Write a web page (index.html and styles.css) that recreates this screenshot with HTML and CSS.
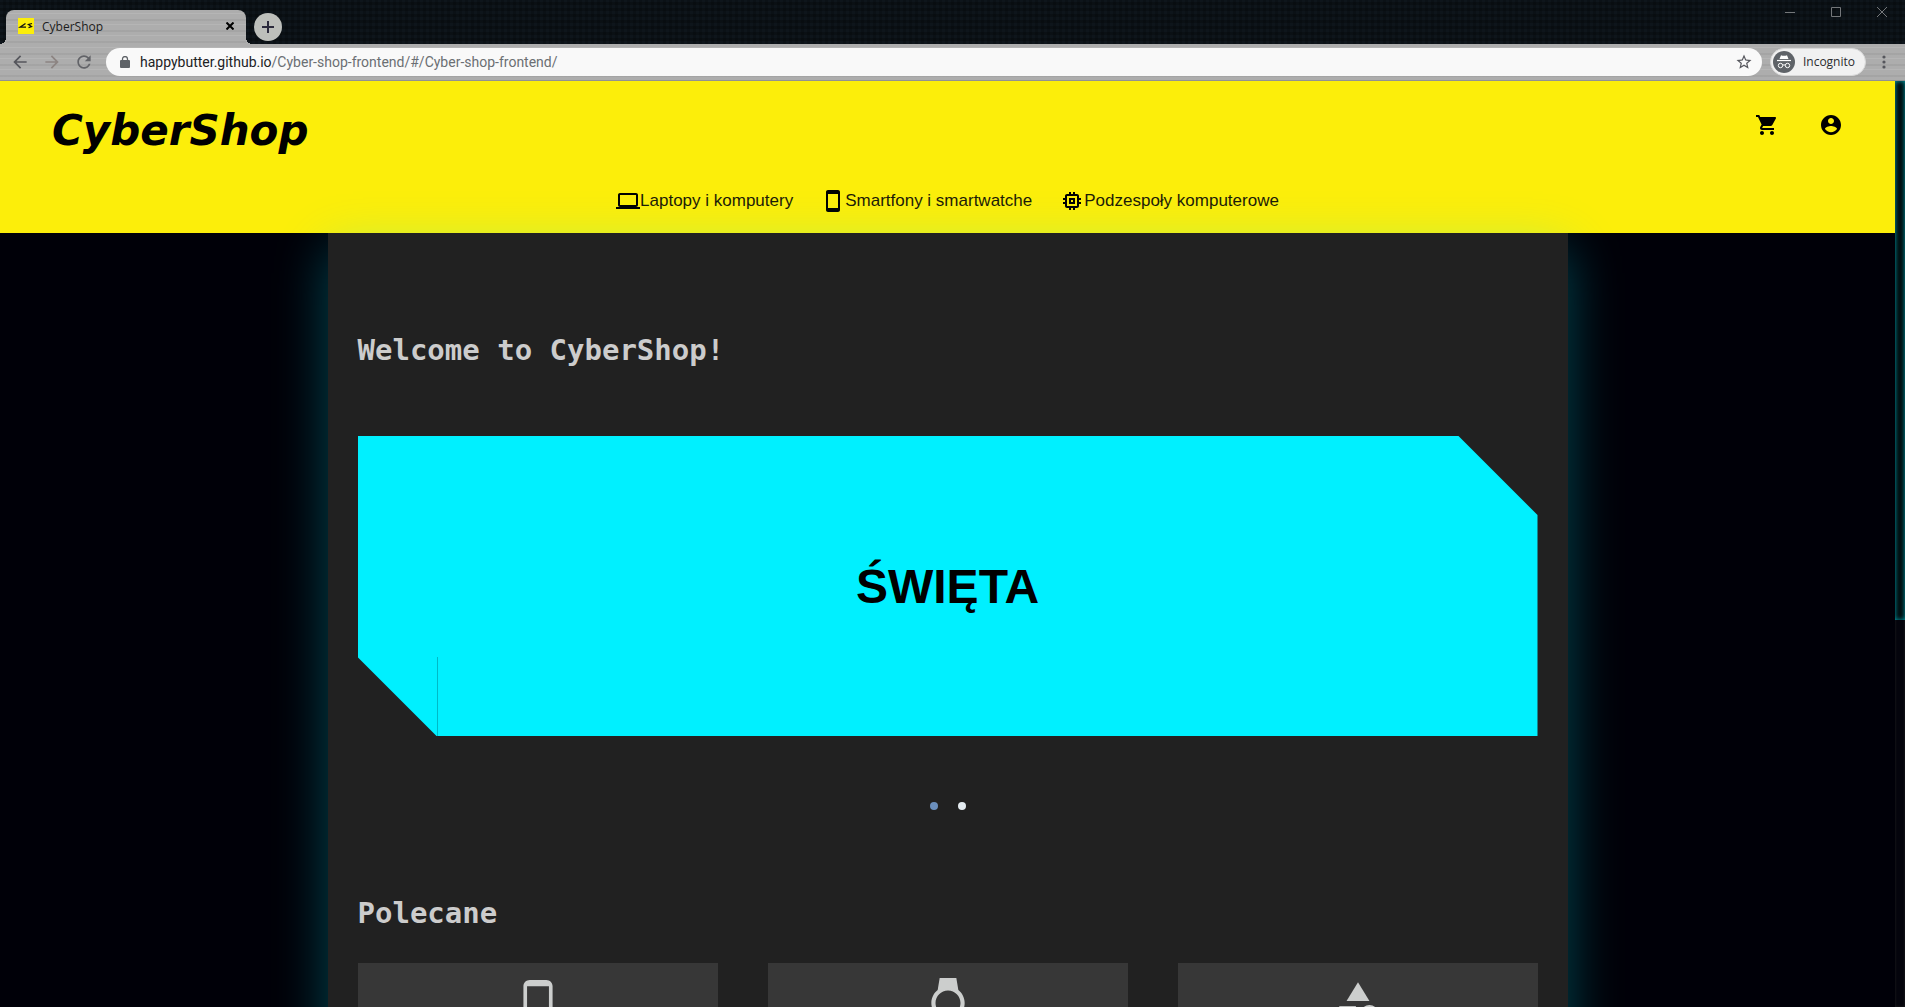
FILE: index.html
```html
<!DOCTYPE html>
<html lang="pl">
<head>
<meta charset="utf-8">
<title>CyberShop</title>
<link rel="stylesheet" href="styles.css">
</head>
<body>
<div class="browser">
  <div class="tabstrip">
    <div class="tab">
      <svg class="favicon" viewBox="0 0 16 16" aria-hidden="true"><rect width="16" height="16" fill="#fcee0a"/><path d="M7.500 5.500 2 9.200h6M14 5.500 10.500 6.500l3 2-3 1.200" fill="none" stroke="#111" stroke-width="1.300"/></svg>
      <span class="tab-title">CyberShop</span>
      <button class="tab-close" aria-label="Close tab"><svg width="8" height="8" viewBox="0 0 8 8"><path d="M.5.500l7 7M7.500.500l-7 7" stroke="#000" stroke-width="2"/></svg></button>
    </div>
    <button class="new-tab" aria-label="New tab"><svg width="12" height="12" viewBox="0 0 12 12"><path d="M6 0v12M0 6h12" stroke="#2b2a3c" stroke-width="2"/></svg></button>
    <div class="window-controls">
      <button aria-label="Minimize"><svg width="10" height="10" viewBox="0 0 10 10"><path d="M0 5.500h10"/></svg></button>
      <button aria-label="Maximize"><svg width="10" height="10" viewBox="0 0 10 10"><path d="M.5.500h9v9h-9z"/></svg></button>
      <button aria-label="Close"><svg width="10" height="10" viewBox="0 0 10 10"><path d="M0 0l10 10M10 0 0 10"/></svg></button>
    </div>
  </div>
  <div class="toolbar">
    <div class="nav-buttons">
      <button aria-label="Back"><svg width="20" height="20" viewBox="0 0 24 24"><path d="M20 11H7.830l5.590-5.590L12 4l-8 8 8 8 1.410-1.410L7.830 13H20v-2z" fill="#55565c"/></svg></button>
      <button aria-label="Forward"><svg width="20" height="20" viewBox="0 0 24 24"><path d="M12 4l-1.410 1.410L16.170 11H4v2h12.170l-5.580 5.590L12 20l8-8z" fill="#8c8482"/></svg></button>
      <button aria-label="Reload"><svg width="20" height="20" viewBox="0 0 24 24"><path d="M17.650 6.350C16.200 4.900 14.210 4 12 4c-4.420 0-7.990 3.580-7.990 8s3.570 8 7.990 8c3.730 0 6.840-2.550 7.730-6h-2.080c-.82 2.330-3.040 4-5.650 4-3.310 0-6-2.690-6-6s2.690-6 6-6c1.660 0 3.140.69 4.220 1.780L13 11h7V4l-2.350 2.350z" fill="#626368"/></svg></button>
    </div>
    <div class="omnibox">
      <svg class="lock" width="10" height="12" viewBox="0 0 10 12" aria-hidden="true"><rect y="4" width="10" height="8" rx="1" fill="#5f6368"/><path d="M2.500 5V3a2.500 2.500 0 0 1 5 0v2" fill="none" stroke="#5f6368" stroke-width="1.300"/></svg>
      <div class="url" role="textbox" aria-label="Address">happybutter.github.io<span>/Cyber-shop-frontend/#/Cyber-shop-frontend/</span></div>
      <button class="bookmark" aria-label="Bookmark"><svg width="18" height="18" viewBox="0 0 24 24"><path d="M22 9.240l-7.190-.62L12 2 9.190 8.630 2 9.240l5.460 4.730L5.820 21 12 17.270 18.180 21l-1.630-7.030L22 9.240zM12 15.400l-3.760 2.270 1-4.280-3.320-2.880 4.380-.38L12 6.100l1.710 4.040 4.380.38-3.320 2.880 1 4.280L12 15.400z" fill="#55565c"/></svg></button>
    </div>
    <button class="incognito">
      <svg width="22" height="22" viewBox="0 0 22 22" aria-hidden="true"><circle cx="11" cy="11" r="11" fill="#5f6368"/><path d="M4 9.500h14" stroke="#fff" stroke-width="1.200"/><path d="M6.500 8 8 4.300q3 1 6 0L15.500 8z" fill="#fff"/><g fill="none" stroke="#fff"><circle cx="7.500" cy="14.500" r="2.200"/><circle cx="14.500" cy="14.500" r="2.200"/><path d="M9.700 14.200q1.300-.8 2.600 0"/></g></svg>
      Incognito
    </button>
    <button class="menu" aria-label="Menu"><svg width="4" height="14" viewBox="0 0 4 14"><g fill="#55565c"><circle cx="2" cy="2" r="1.600"/><circle cx="2" cy="7" r="1.600"/><circle cx="2" cy="12" r="1.600"/></g></svg></button>
  </div>
  <div class="viewport">
    <div class="page">
      <header class="header">
        <div class="header-top">
          <a class="logo" href="#">CyberShop</a>
          <div class="actions">
            <a href="#" aria-label="Koszyk"><svg class="icon" viewBox="0 0 24 24"><path d="M7 18c-1.100 0-1.990.9-1.990 2S5.900 22 7 22s2-.9 2-2-.9-2-2-2zM1 2v2h2l3.600 7.590-1.350 2.450c-.16.28-.25.61-.25.96 0 1.100.9 2 2 2h12v-2H7.420c-.14 0-.25-.11-.25-.25l.03-.12.900-1.630h7.450c.75 0 1.410-.41 1.750-1.030l3.580-6.490c.08-.14.12-.31.12-.48 0-.55-.45-1-1-1H5.210l-.94-2H1zm16 16c-1.100 0-1.990.9-1.990 2s.89 2 1.990 2 2-.9 2-2-.9-2-2-2z"/></svg></a>
            <a href="#" aria-label="Konto"><svg class="icon" viewBox="0 0 24 24"><path d="M12 2C6.480 2 2 6.480 2 12s4.480 10 10 10 10-4.480 10-10S17.520 2 12 2zm0 3c1.660 0 3 1.340 3 3s-1.340 3-3 3-3-1.340-3-3 1.340-3 3-3zm0 14.200c-2.500 0-4.710-1.280-6-3.220.03-1.990 4-3.080 6-3.080 1.990 0 5.970 1.090 6 3.080-1.290 1.940-3.500 3.220-6 3.220z"/></svg></a>
          </div>
        </div>
        <nav class="categories">
          <a href="#"><svg class="icon" viewBox="0 0 24 24"><path d="M20 18c1.100 0 1.990-.9 1.990-2L22 6c0-1.100-.9-2-2-2H4c-1.100 0-2 .9-2 2v10c0 1.100.9 2 2 2H0v2h24v-2h-4zM4 6h16v10H4V6z"/></svg>Laptopy i komputery</a>
          <a href="#"><svg class="icon" viewBox="0 0 24 24"><path d="M17 1.010L7 1c-1.100 0-2 .9-2 2v18c0 1.100.9 2 2 2h10c1.100 0 2-.9 2-2V3c0-1.100-.9-1.990-2-1.990zM17 19H7V5h10v14z"/></svg>Smartfony i smartwatche</a>
          <a href="#"><svg class="icon" viewBox="0 0 24 24"><path d="M15 9H9v6h6V9zm-2 4h-2v-2h2v2zm8-2V9h-2V7c0-1.100-.9-2-2-2h-2V3h-2v2h-2V3H9v2H7c-1.100 0-2 .9-2 2v2H3v2h2v2H3v2h2v2c0 1.100.9 2 2 2h2v2h2v-2h2v2h2v-2h2c1.100 0 2-.9 2-2v-2h2v-2h-2v-2h2zm-4 6H7V7h10v10z"/></svg>Podzespoły komputerowe</a>
        </nav>
      </header>
      <main class="content">
        <h2>Welcome to CyberShop!</h2>
        <section class="banner">ŚWIĘTA</section>
        <div class="dots">
          <button class="dot active" aria-label="Slajd 1"></button>
          <button class="dot" aria-label="Slajd 2"></button>
        </div>
        <h2 class="recommended">Polecane</h2>
        <div class="cards">
          <a class="card" href="#" aria-label="Smartfony"><svg viewBox="0 0 24 24"><path d="M16 1H8C6.340 1 5 2.340 5 4v16c0 1.660 1.340 3 3 3h8c1.660 0 3-1.340 3-3V4c0-1.660-1.340-3-3-3zm-2 20h-4v-1h4v1zm3.250-3H6.750V4h10.500v14z"/></svg></a>
          <a class="card" href="#" aria-label="Smartwatche"><svg viewBox="0 0 24 24"><path d="M20 12c0-2.540-1.190-4.810-3.040-6.270L16 0H8l-.95 5.730C5.190 7.190 4 9.450 4 12s1.190 4.810 3.050 6.270L8 24h8l.96-5.730C18.810 16.810 20 14.540 20 12zM6 12c0-3.310 2.690-6 6-6s6 2.690 6 6-2.690 6-6 6-6-2.690-6-6z"/></svg></a>
          <a class="card" href="#" aria-label="Kategorie"><svg viewBox="0 0 24 24"><path d="M12 2l-5.500 9h11z"/><circle cx="17.500" cy="17.500" r="4.500"/><path d="M3 13.500h8v8H3z"/></svg></a>
        </div>
      </main>
    </div>
    <div class="scrollbar"><div class="thumb"></div></div>
  </div>
</div>
</body>
</html>
```
FILE: styles.css
```css
* { box-sizing: border-box; }
body { margin: 0; font-family: "Liberation Sans", Arial, sans-serif; background: #000008; }
button { border: 0; padding: 0; background: none; font: inherit; color: inherit; display: flex; align-items: center; justify-content: center; }
a { color: inherit; text-decoration: none; }
svg { display: block; flex: none; }

.browser { display: flex; flex-direction: column; height: 100vh; overflow: hidden; }

/* Window chrome */
.tabstrip {
  display: flex; align-items: flex-end; flex: none; height: 44px; padding-left: 6px;
  background:
    repeating-linear-gradient(0deg, transparent 0 3px, rgba(0, 0, 0, .25) 3px 6px),
    repeating-linear-gradient(90deg, #0e151b 0 3px, #0b1116 3px 6px);
  font: 12px "Open Sans", "Noto Sans", sans-serif;
}
.tab, .toolbar {
  background:
    repeating-linear-gradient(180deg, transparent 0 3px, rgba(255, 255, 255, .1) 3px 4px, transparent 4px 9px, rgba(0, 0, 0, .05) 9px 11px),
    #adadad;
}
.tab { display: flex; align-items: center; width: 240px; height: 34px; padding: 0 10px 2px 12px; border-radius: 8px 8px 0 0; position: relative; }
.tab::before, .tab::after { content: ""; position: absolute; bottom: 0; width: 6px; height: 6px; }
.tab::before { right: 100%; background: radial-gradient(circle at 0 0, transparent 6px, #adadad 6px); }
.tab::after { left: 100%; background: radial-gradient(circle at 100% 0, transparent 6px, #adadad 6px); }
.favicon { width: 16px; height: 16px; }
.tab-title { flex: 1; padding-left: 8px; color: #1c1c20; }
.tab-close { width: 12px; height: 12px; }
.new-tab { width: 28px; height: 28px; margin: 0 0 3px 8px; border-radius: 50%; background: #bdbfbb; }
.window-controls { display: flex; align-self: flex-start; margin-left: auto; }
.window-controls button { width: 46px; height: 24px; }
.window-controls path { fill: none; stroke: #74777a; }

.toolbar { display: flex; align-items: center; flex: none; height: 37px; padding: 0 11px 1px 10px; border-bottom: 1px solid #929292; font: 12px "Open Sans", "Noto Sans", sans-serif; }
.nav-buttons { display: flex; gap: 12px; width: 96px; }
.omnibox { display: flex; align-items: center; flex: 1; height: 28px; padding: 0 9px 0 14px; border-radius: 14px; background: #f9f9f9; }
.url { flex: 1; padding-left: 10px; font: 14px Roboto, "Open Sans", sans-serif; color: #202124; }
.url span { color: #6b6f73; }
.incognito { gap: 8px; height: 28px; margin-left: 8px; padding: 0 10px 0 2px; border: 1px solid #d8d8d8; border-radius: 14px; background: #f1f1f1; color: #2a2b2e; }
.menu { width: 20px; height: 20px; margin-left: 8px; }

.viewport { display: flex; flex: 1; min-height: 0; overflow: hidden; }
.page { flex: 1; min-width: 0; background: #000008; }
.scrollbar { width: 10px; background: #04040c; box-shadow: inset 0 0 3px #222; }
.thumb { height: 58.2%; background: #000b0e; box-shadow: inset 0 0 5px #00a5af; }

/* Shop header */
.header { background: #fcee0a; }
.header-top { display: flex; align-items: center; justify-content: space-between; height: 88px; padding: 0 52px; }
.logo { padding-top: 12px; font: italic bold 42px/48px "DejaVu Sans", sans-serif; color: #000; }
.actions { display: flex; gap: 40px; }
.icon { width: 24px; height: 24px; fill: #000; }
.categories { display: flex; justify-content: center; gap: 28px; height: 64px; font-size: 17px; color: #1c1b06; }
.categories a { display: flex; align-items: center; }

/* Main column */
.content { position: relative; max-width: 1240px; min-height: 100%; margin: 0 auto; padding: 99px 30px 60px; background: #212121; box-shadow: 0 15px 50px rgba(0, 240, 255, .3); }
h2 { margin: 0 0 68px; font: bold 29px/36px "DejaVu Sans Mono", monospace; color: #cccccc; }
.banner {
  display: flex; align-items: center; justify-content: center; height: 300px; color: #000; font-size: 48px; font-weight: bold;
  background: linear-gradient(#00b9c6, #00b9c6) 79px 100% / 1px 79px no-repeat, #00f0ff;
  clip-path: polygon(0 0, calc(100% - 79px) 0, 100% 79px, 100% 100%, 79px 100%, 0 calc(100% - 79px));
}
.dots { display: flex; justify-content: center; margin: 56px 0 75px; }
.dot { width: 28px; height: 28px; }
.dot::before { content: ""; width: 8px; height: 8px; border-radius: 50%; background: #e4ebf0; }
.dot.active::before { background: #6b8fbd; }
.recommended { margin-bottom: 32px; }
.cards { display: grid; grid-template-columns: repeat(3, 1fr); gap: 50px; }
.card { display: flex; justify-content: center; height: 200px; padding-top: 15px; background: #373737; }
.card svg { width: 50px; height: 50px; fill: #cccecd; }
```
